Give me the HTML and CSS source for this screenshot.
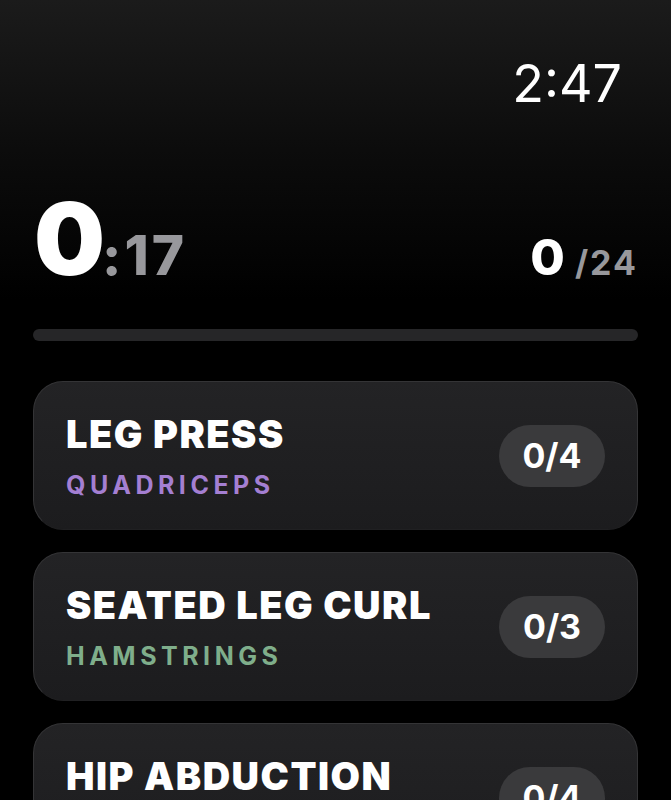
FILE: index.html
```html
<!DOCTYPE html>
<html lang="en">
<head>
    <meta charset="UTF-8">
    <meta name="viewport" content="width=device-width, initial-scale=1.0">
    <title>Workout</title>
    <link rel="stylesheet" href="styles.css">
</head>
<body>
    <div class="screen">
        <div class="clock">2:47</div>

        <div class="stats">
            <div class="elapsed">
                <span class="elapsed-min">0</span><span class="elapsed-sec">:17</span>
            </div>
            <div class="sets">
                <span class="sets-done">0</span><span class="sets-total">/24</span>
            </div>
        </div>

        <div class="progress"><div class="progress-fill" style="width: 0%"></div></div>

        <ul class="exercises">
            <li class="exercise">
                <div class="exercise-info">
                    <h3>LEG PRESS</h3>
                    <p class="muscle quads">QUADRICEPS</p>
                </div>
                <span class="count">0/4</span>
            </li>
            <li class="exercise">
                <div class="exercise-info">
                    <h3>SEATED LEG CURL</h3>
                    <p class="muscle hams">HAMSTRINGS</p>
                </div>
                <span class="count">0/3</span>
            </li>
            <li class="exercise">
                <div class="exercise-info">
                    <h3>HIP ABDUCTION</h3>
                    <p class="muscle glutes">GLUTES</p>
                </div>
                <span class="count">0/4</span>
            </li>
        </ul>
    </div>
</body>
</html>
```

FILE: styles.css
```css
body {
    margin: 0;
    padding: 0;
    background-color: #000;
    font-family: Inter, "Liberation Sans", sans-serif;
    color: #fff;
    overflow: hidden;
}
.screen {
    height: 800px;
    overflow: hidden;
    padding: 0 33px;
    background: linear-gradient(to bottom, #1b1b1b 0px, #0c0c0c 150px, #000 300px);
}
.clock {
    text-align: right;
    padding-top: 54px;
    padding-right: 16px;
    font-size: 52px;
    font-weight: 400;
    line-height: 60px;
}
.stats {
    display: flex;
    justify-content: space-between;
    align-items: baseline;
    margin-top: 75px;
    padding-left: 1px;
    line-height: 1;
}
.elapsed-min {
    font-size: 100px;
    font-weight: 900;
    letter-spacing: -3px;
}
.elapsed-sec {
    font-size: 55px;
    font-weight: 800;
    color: #98989c;
    letter-spacing: 3px;
}
.sets-done {
    font-size: 50px;
    font-weight: 800;
}
.sets-total {
    font-size: 34px;
    font-weight: 700;
    color: #98989c;
    letter-spacing: 2px;
    margin-left: 10px;
}
.progress {
    margin-top: 40px;
    height: 12px;
    border-radius: 6px;
    background-color: #262628;
    overflow: hidden;
}
.progress-fill {
    height: 100%;
    background-color: #fff;
}
.exercises {
    list-style: none;
    margin: 40px 0 0;
    padding: 0;
}
.exercise {
    display: flex;
    align-items: center;
    justify-content: space-between;
    height: 149px;
    box-sizing: border-box;
    margin-bottom: 22px;
    padding: 0 32px 0 32px;
    border-radius: 30px;
    border: 1px solid #343436;
    border-bottom-color: #202022;
    background: linear-gradient(to bottom, #232325, #1c1c1e);
}
.exercise h3 {
    margin: 0;
    font-size: 38px;
    font-weight: 900;
    line-height: 44px;
    letter-spacing: 1.5px;
}
.muscle {
    margin: 14px 0 0;
    font-size: 25px;
    font-weight: 700;
    line-height: 30px;
    letter-spacing: 4.5px;
}
.quads { color: #a47fd2; }
.hams { color: #7fae8b; }
.glutes { color: #d69a6a; }
.count {
    display: inline-block;
    min-width: 106px;
    box-sizing: border-box;
    padding: 0 18px;
    height: 62px;
    line-height: 62px;
    text-align: center;
    border-radius: 31px;
    background-color: #3a3a3c;
    font-size: 34px;
    font-weight: 700;
}
```
